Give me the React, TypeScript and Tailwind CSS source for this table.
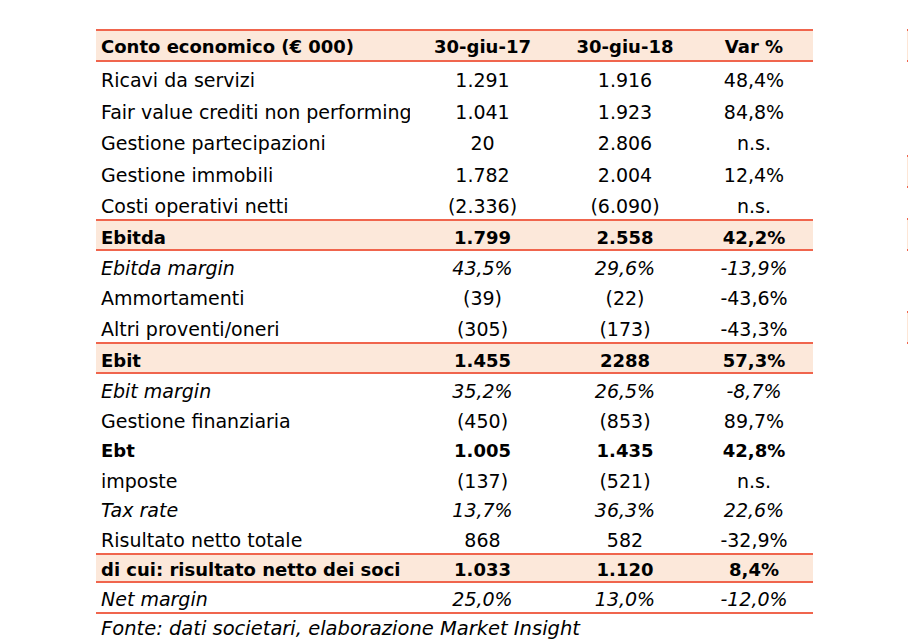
type Row = {
  label: string
  a: string
  b: string
  v: string
  kind?: 'bold' | 'italic'
  band?: boolean
  h: string
}

const rows: Row[] = [
  { label: 'Ricavi da servizi', a: '1.291', b: '1.916', v: '48,4%', h: 'h-[31px]' },
  { label: 'Fair value crediti non performing', a: '1.041', b: '1.923', v: '84,8%', h: 'h-[32px]' },
  { label: 'Gestione partecipazioni', a: '20', b: '2.806', v: 'n.s.', h: 'h-[31px]' },
  { label: 'Gestione immobili', a: '1.782', b: '2.004', v: '12,4%', h: 'h-[32px]' },
  { label: 'Costi operativi netti', a: '(2.336)', b: '(6.090)', v: 'n.s.', h: 'h-[31px]' },
  { label: 'Ebitda', a: '1.799', b: '2.558', v: '42,2%', kind: 'bold', band: true, h: 'h-[32px]' },
  { label: 'Ebitda margin', a: '43,5%', b: '29,6%', v: '-13,9%', kind: 'italic', h: 'h-[30px]' },
  { label: 'Ammortamenti', a: '(39)', b: '(22)', v: '-43,6%', h: 'h-[30px]' },
  { label: 'Altri proventi/oneri', a: '(305)', b: '(173)', v: '-43,3%', h: 'h-[31px]' },
  { label: 'Ebit', a: '1.455', b: '2288', v: '57,3%', kind: 'bold', band: true, h: 'h-[32px]' },
  { label: 'Ebit margin', a: '35,2%', b: '26,5%', v: '-8,7%', kind: 'italic', h: 'h-[30px]' },
  { label: 'Gestione finanziaria', a: '(450)', b: '(853)', v: '89,7%', h: 'h-[30px]' },
  { label: 'Ebt', a: '1.005', b: '1.435', v: '42,8%', kind: 'bold', h: 'h-[30px]' },
  { label: 'imposte', a: '(137)', b: '(521)', v: 'n.s.', h: 'h-[30px]' },
  { label: 'Tax rate', a: '13,7%', b: '36,3%', v: '22,6%', kind: 'italic', h: 'h-[29px]' },
  { label: 'Risultato netto totale', a: '868', b: '582', v: '-32,9%', h: 'h-[30px]' },
  { label: 'di cui: risultato netto dei soci', a: '1.033', b: '1.120', v: '8,4%', kind: 'bold', band: true, h: 'h-[30px]' },
  { label: 'Net margin', a: '25,0%', b: '13,0%', v: '-12,0%', kind: 'italic', h: 'h-[31px]' },
]

const cols = 'grid grid-cols-[314px_145px_140px_118px] items-end leading-[22px]'

function TableRow({ row, last }: { row: Row; last: boolean }) {
  const text =
    row.kind === 'bold'
      ? 'font-bold text-[18px]'
      : row.kind === 'italic'
        ? 'italic text-[19px]'
        : 'text-[19px]'
  const band = row.band ? 'bg-[#fce8da] border-y-2 border-[#f0654d] pb-0' : 'pb-[2px]'
  const bottom = last ? 'border-b-2 border-[#f0654d]' : ''
  return (
    <div className={`${cols} ${row.h} ${band} ${bottom} ${text}`}>
      <div className="pl-[5px] overflow-hidden whitespace-nowrap">{row.label}</div>
      <div className="text-center">{row.a}</div>
      <div className="text-center">{row.b}</div>
      <div className="text-center">{row.v}</div>
    </div>
  )
}

function EdgeMark({ h }: { h: string }) {
  return <div className={`${h} w-[1px] bg-[#fde6d6] border-y-2 border-[#f0654d]`} />
}

export default function App() {
  return (
    <div
      className="w-[909px] h-[644px] bg-white text-black flex overflow-hidden"
      style={{ fontFamily: '"DejaVu Sans", sans-serif' }}
    >
      <div className="ml-[96px] w-[717px] pt-[29px]">
        <div className={`${cols} pb-[2px] h-[33px] bg-[#fce8da] border-y-2 border-[#f0654d] font-bold text-[18px]`}>
          <div className="pl-[5px] whitespace-nowrap">Conto economico (€ 000)</div>
          <div className="text-center">30-giu-17</div>
          <div className="text-center">30-giu-18</div>
          <div className="text-center">Var %</div>
        </div>
        {rows.map((row, i) => (
          <TableRow key={row.label} row={row} last={i === rows.length - 1} />
        ))}
        <div className="h-[30px] flex items-center pl-[5px] italic text-[19.5px] whitespace-nowrap">
          Fonte: dati societari, elaborazione Market Insight
        </div>
      </div>
      <div className="flex-1 flex justify-end pr-[1px]">
        <div className="flex flex-col">
          <div className="h-[29px]" />
          <EdgeMark h="h-[33px]" />
          <div className="h-[93px]" />
          <EdgeMark h="h-[33px]" />
          <div className="h-[30px]" />
          <EdgeMark h="h-[33px]" />
          <div className="h-[60px]" />
          <EdgeMark h="h-[33px]" />
        </div>
      </div>
    </div>
  )
}
